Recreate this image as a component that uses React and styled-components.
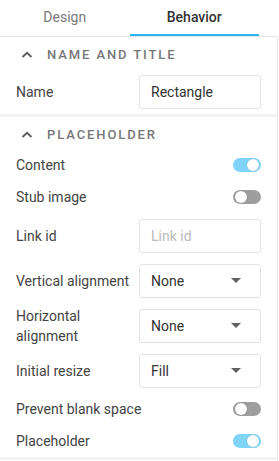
import React, { useState } from "react";
import styled, { createGlobalStyle } from "styled-components";

const GlobalStyle = createGlobalStyle`
    body {
        margin: 0;
        background: #fff;
        font-family: Roboto, "Noto Sans", Arial, sans-serif;
    }
`

const Panel = styled.div`
    width: 278px;
    height: 461px;
    box-sizing: border-box;
    display: flex;
    flex-direction: column;
`

const Tabs = styled.div`
    display: flex;
    height: 37px;
    box-sizing: border-box;
    border-bottom: 1px solid #e3e3e3;
    margin-right: 1px;
`

const Tab = styled.button`
    width: 129.5px;
    height: 36px;
    padding: 0 0 2px;
    border: none;
    background: transparent;
    font-family: inherit;
    font-size: 14px;
    font-weight: ${p => p.$active ? 500 : 400};
    color: ${p => p.$active ? '#333' : '#7a7a7a'};
    box-shadow: ${p => p.$active ? 'inset 0 -2px 0 #29b6f6' : 'none'};
    cursor: pointer;
`

const Body = styled.div`
    flex: 1;
    border-right: 1px solid #e6e6e6;
`

const Section = styled.section`
    border-bottom: 3px solid #f3f3f3;
`

const Header = styled.div`
    height: 32px;
    padding: 3px 16px 0 21px;
    box-sizing: border-box;
    display: flex;
    align-items: center;
    gap: 14px;
    font-size: 13px;
    font-weight: 500;
    letter-spacing: 1.9px;
    color: #777;
`

const Row = styled.div`
    display: flex;
    align-items: center;
    box-sizing: border-box;
    padding: 0 16px;
    height: ${p => p.$field ? '45px' : '32px'};
    font-size: 14px;
    color: #444;
`

const Label = styled.div`
    flex: 1;
    line-height: 20px;
`

const Input = styled.input`
    width: 122px;
    height: 34px;
    box-sizing: border-box;
    border: 1px solid #e2e2e2;
    border-radius: 3px;
    padding: 0 11px;
    font-family: inherit;
    font-size: 14px;
    color: #333;
    outline: none;
    &::placeholder {
        color: #bbb;
    }
`

const Select = styled.div`
    width: 122px;
    height: 34px;
    box-sizing: border-box;
    border: 1px solid #e2e2e2;
    border-radius: 3px;
    padding: 0 19px 0 11px;
    display: flex;
    align-items: center;
    justify-content: space-between;
    color: #333;
    &::after {
        content: "";
        border-left: 5px solid transparent;
        border-right: 5px solid transparent;
        border-top: 5px solid #606060;
    }
`

const Track = styled.button`
    width: 28px;
    height: 14px;
    padding: 0;
    border: none;
    border-radius: 7px;
    position: relative;
    background: ${p => p.$on ? '#80d4fa' : '#9e9e9e'};
    cursor: pointer;
    &::after {
        content: "";
        position: absolute;
        top: 1px;
        left: ${p => p.$on ? '14px' : '2px'};
        width: 12px;
        height: 12px;
        border-radius: 50%;
        background: #fff;
        box-shadow: 0 0 1px rgba(0,0,0,0.3);
    }
`

function Chevron() {
    return (
        <svg width="12" height="7" viewBox="0 0 12 7">
            <path d="M1.5 6 L6 1.8 L10.5 6" fill="none" stroke="#606060" strokeWidth="2" />
        </svg>
    )
}

function Toggle({ initial }) {
    const [on, setOn] = useState(initial)
    return <Track $on={on} onClick={() => setOn(!on)} />
}

function App() {
    const [tab, setTab] = useState('behavior')
    return (
        <Panel>
            <GlobalStyle />
            <Tabs>
                <Tab $active={tab === 'design'} onClick={() => setTab('design')}>Design</Tab>
                <Tab $active={tab === 'behavior'} onClick={() => setTab('behavior')}>Behavior</Tab>
            </Tabs>
            <Body>
                <Section>
                    <Header><Chevron />NAME AND TITLE</Header>
                    <Row $field>
                        <Label>Name</Label>
                        <Input defaultValue="Rectangle" />
                    </Row>
                </Section>
                <Section>
                    <Header><Chevron />PLACEHOLDER</Header>
                    <Row>
                        <Label>Content</Label>
                        <Toggle initial={true} />
                    </Row>
                    <Row>
                        <Label>Stub image</Label>
                        <Toggle initial={false} />
                    </Row>
                    <Row $field>
                        <Label>Link id</Label>
                        <Input placeholder="Link id" />
                    </Row>
                    <Row $field>
                        <Label>Vertical alignment</Label>
                        <Select>None</Select>
                    </Row>
                    <Row $field>
                        <Label>Horizontal<br />alignment</Label>
                        <Select>None</Select>
                    </Row>
                    <Row $field>
                        <Label>Initial resize</Label>
                        <Select>Fill</Select>
                    </Row>
                    <Row>
                        <Label>Prevent blank space</Label>
                        <Toggle initial={false} />
                    </Row>
                    <Row>
                        <Label>Placeholder</Label>
                        <Toggle initial={true} />
                    </Row>
                </Section>
            </Body>
        </Panel>
    )
}

export default App
